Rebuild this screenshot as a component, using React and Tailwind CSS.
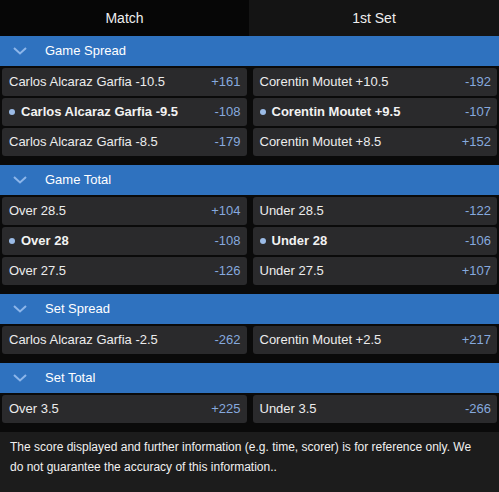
import React from "react";

const sections = [
  {
    title: "Game Spread",
    rows: [
      [{ label: "Carlos Alcaraz Garfia -10.5", odds: "+161" }, { label: "Corentin Moutet +10.5", odds: "-192" }],
      [{ label: "Carlos Alcaraz Garfia -9.5", odds: "-108", main: true }, { label: "Corentin Moutet +9.5", odds: "-107", main: true }],
      [{ label: "Carlos Alcaraz Garfia -8.5", odds: "-179" }, { label: "Corentin Moutet +8.5", odds: "+152" }],
    ],
  },
  {
    title: "Game Total",
    rows: [
      [{ label: "Over 28.5", odds: "+104" }, { label: "Under 28.5", odds: "-122" }],
      [{ label: "Over 28", odds: "-108", main: true }, { label: "Under 28", odds: "-106", main: true }],
      [{ label: "Over 27.5", odds: "-126" }, { label: "Under 27.5", odds: "+107" }],
    ],
  },
  {
    title: "Set Spread",
    rows: [[{ label: "Carlos Alcaraz Garfia -2.5", odds: "-262" }, { label: "Corentin Moutet +2.5", odds: "+217" }]],
  },
  {
    title: "Set Total",
    rows: [[{ label: "Over 3.5", odds: "+225" }, { label: "Under 3.5", odds: "-266" }]],
  },
];

const Chevron = () => (
  <svg width="14" height="8" viewBox="0 0 14 8" fill="none">
    <path d="M1 1l6 5.5L13 1" stroke="#8db6ea" strokeWidth="2" />
  </svg>
);

function Cell({ label, odds, main }) {
  return (
    <div className="flex h-[28px] items-center justify-between rounded-[3px] bg-[#2a2a2c] pl-[7px] pr-[6px]">
      <div className="flex items-center">
        {main && <span className="mr-[6px] h-[6px] w-[6px] rounded-full bg-[#9bbbe6]" />}
        <span className={main ? "font-bold text-[#f2f2f2]" : "text-[#ececec]"}>{label}</span>
      </div>
      <span className="text-[#86a9de]">{odds}</span>
    </div>
  );
}

export default function App() {
  return (
    <div className="h-[492px] w-[499px] overflow-hidden bg-[#0a0a0a] font-['Liberation_Sans',Arial,sans-serif] text-[13px]">
      <div className="flex h-[36px] text-[14px] text-[#eeeeee]">
        <div className="flex w-[249px] items-center justify-center bg-[#060606]">Match</div>
        <div className="flex flex-1 items-center justify-center bg-[#141414]">1st Set</div>
      </div>
      {sections.map((s) => (
        <div key={s.title} className="mb-[9px]">
          <div className="flex h-[30px] items-center bg-[#2f72bf] text-white">
            <div className="ml-[13px] w-[32px]">
              <Chevron />
            </div>
            <span>{s.title}</span>
          </div>
          <div className="mt-[2px] flex flex-col gap-[2px] px-[2px]">
            {s.rows.map((r, i) => (
              <div key={i} className="grid grid-cols-2 gap-[6px]">
                <Cell {...r[0]} />
                <Cell {...r[1]} />
              </div>
            ))}
          </div>
        </div>
      ))}
      <div className="h-[60px] bg-[#1c1c1c] pl-[10px] pr-[22px] pt-[5px] text-[12px] leading-[20px] text-[#f0f0f0]">
        The score displayed and further information (e.g. time, scorer) is for reference only. We do not guarantee the
        accuracy of this information..
      </div>
    </div>
  );
}
